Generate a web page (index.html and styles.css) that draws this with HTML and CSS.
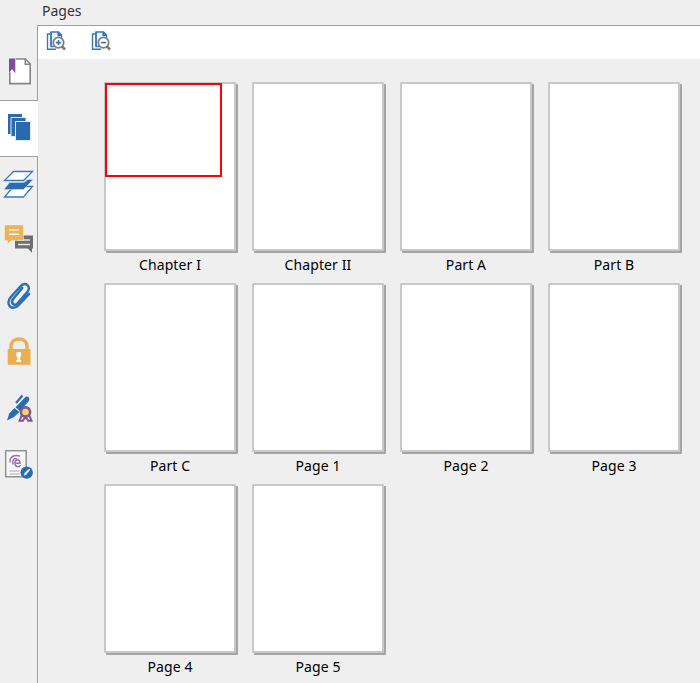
FILE: index.html
```html
<!DOCTYPE html>
<html lang="en">
<head>
<meta charset="utf-8">
<title>Pages</title>
<link rel="stylesheet" href="styles.css">
</head>
<body>
<div class="app">
  <header class="title">Pages</header>
  <nav class="sidebar">
    <div class="tab first"><svg width="38" height="44" viewBox="0 0 38 44"><path d="M9.8 28.500V39.600H30.200V20L25.500 15H16" fill="#fff" stroke="#858585" stroke-width="1.600"/><path d="M25.300 15v5.200h5.200" fill="none" stroke="#858585" stroke-width="1.600"/><path d="M9 14.500h6.300v14.700l-3.200-4.100L9 29.200z" fill="#7b4f93"/></svg></div>
    <div class="tab active"><svg width="38" height="44" viewBox="0 0 38 44"><path d="M8 7h14v20H8z" fill="#2a69ab"/><path d="M11 10.500h15v19H11z" fill="#2a69ab" stroke="#dcecf8"/><path d="M15.500 14.500h15v19h-15z" fill="#2a69ab" stroke="#dcecf8"/></svg></div>
    <div class="tab"><svg width="38" height="44" viewBox="0 0 38 44"><path d="M13.500 9.500H32.500L23.500 18.500H4.500z" fill="#fff" stroke="#397bb9" stroke-width="1.300"/><path d="M13.500 24.500H32.500L23.500 35H4.500z" fill="#fff" stroke="#397bb9" stroke-width="1.300"/><path d="M9.500 20.500h14.500l4-3h5L23.500 27.500H4z" fill="#2a6caf" stroke="#efefef" stroke-width=".4"/></svg></div>
    <div class="tab"><svg width="38" height="44" viewBox="0 0 38 44"><path d="M15 17.500h18v13h-1v4.200l-4.300-4.200H15z" fill="#6e6e6e"/><path d="M18 22h12M18 26.500h12" stroke="#e4e4e4" stroke-width="1.600"/><path d="M4.500 7H23.500v15.500H11.500L7.500 26v-3.500h-3z" fill="#eeb256" stroke="#efefef" stroke-width=".5"/><path d="M9 12h10M9 16.200h10" stroke="#fff6e5" stroke-width="1.600"/></svg></div>
    <div class="tab"><svg width="38" height="44" viewBox="0 0 38 44"><path d="M22 13.500L12.800 24.500C9.800 28.500 14.200 32.300 17.300 28.800L27 17.600C31.500 12 25 6.500 20.500 11.500L10.500 22.500C4 30.500 12.500 37 18.500 30.500L28.800 19.500" transform="translate(.3 .5)" fill="none" stroke="#2c6fb2" stroke-width="2.500" stroke-linejoin="round" stroke-linecap="round"/></svg></div>
    <div class="tab"><svg width="38" height="44" viewBox="0 0 38 44"><path d="M11 21V16.500c0-10 16-10 16 0V21" fill="none" stroke="#eaae54" stroke-width="3.400"/><rect x="7.700" y="19" width="22.800" height="15.700" rx=".8" fill="#eaae54"/><path d="M16.500 22h4.500v4l-.8 1v3h1v2h-4.800v-2h1v-3h-1z" fill="#fffdf6"/></svg></div>
    <div class="tab"><svg width="38" height="44" viewBox="0 0 38 44"><path d="M7 34.500L9.200 27.500 14.500 22 19.300 26 14 31z" fill="#2a6cae"/><path d="M15.500 21.300L24.500 12Q26.500 9.500 28.800 11.300Q30.200 13 28.500 15.500L20 25z" fill="#2a6cae"/><path d="M16 17L22.500 9.500" stroke="#2a6cae" stroke-width="2.200"/><path d="M22 28.500l-2.500 6.200h3.300l2.700-4 2.700 4h3.300L29 28.500" fill="#efefef" stroke="#80569b" stroke-width="2"/><circle cx="25.500" cy="26" r="4.600" fill="#ffd662" stroke="#80569b" stroke-width="2.600"/></svg></div>
    <div class="tab"><svg width="38" height="44" viewBox="0 0 38 44"><path d="M5.700 8.700h20.500v26H5.700z" fill="#f8f8f8" stroke="#929292" stroke-width="1.500"/><path d="M9.500 29h10M9.500 32h10" stroke="#aaa" stroke-width="1.200"/><path d="M10 20.500C10 13 15.500 13 20 14M13 22.500C12 17 15 15.500 17 17.500M15 21.200h5c0-5-5-4-5 0s4 4.500 5.500 2" fill="none" stroke="#9b75ac" stroke-width="1.500"/><circle cx="26.700" cy="30.600" r="6.200" fill="#286caf"/><path d="M23.700 33.700l1-3 4.500-4 1 1-4 5z" fill="#eaf5ff"/></svg></div>
    <div class="filler"></div>
  </nav>
  <main class="panel">
    <div class="toolbar">
      <svg width="22" height="22" viewBox="0 0 22 22"><path d="M5.500 4H2.500V19.300H11" fill="none" stroke="#3977b6" stroke-width="1.400"/><path d="M6 16.500V2h7.500l3 3V9" fill="#eaf4fd" stroke="#3977b6" stroke-width="1.400"/><path d="M6 2v14.500h3" fill="none" stroke="#3977b6" stroke-width="1.400"/><path d="M12.500 1.500V6h4.500z" fill="#2870b8"/><circle cx="13.500" cy="12.600" r="5.200" fill="#fff" stroke="#808080" stroke-width="1.800"/><path d="M17 16.500l3 3" stroke="#777" stroke-width="2.500"/><path d="M10.800 12.600h5.400M13.500 9.900v5.400" stroke="#3475b4" stroke-width="1.600"/></svg>
      <svg width="22" height="22" viewBox="0 0 22 22"><path d="M5.500 4H2.500V19.300H11" fill="none" stroke="#3977b6" stroke-width="1.400"/><path d="M6 16.500V2h7.500l3 3V9" fill="#eaf4fd" stroke="#3977b6" stroke-width="1.400"/><path d="M6 2v14.500h3" fill="none" stroke="#3977b6" stroke-width="1.400"/><path d="M12.500 1.500V6h4.500z" fill="#2870b8"/><circle cx="13.500" cy="12.600" r="5.200" fill="#fff" stroke="#808080" stroke-width="1.800"/><path d="M17 16.500l3 3" stroke="#777" stroke-width="2.500"/><path d="M10.800 12.600h5.400" stroke="#3475b4" stroke-width="1.600"/></svg>
    </div>
    <div class="grid">
      <figure><div class="page"><div class="viewport"></div></div><figcaption>Chapter I</figcaption></figure>
      <figure><div class="page"></div><figcaption>Chapter II</figcaption></figure>
      <figure><div class="page"></div><figcaption>Part A</figcaption></figure>
      <figure><div class="page"></div><figcaption>Part B</figcaption></figure>
      <figure><div class="page"></div><figcaption>Part C</figcaption></figure>
      <figure><div class="page"></div><figcaption>Page 1</figcaption></figure>
      <figure><div class="page"></div><figcaption>Page 2</figcaption></figure>
      <figure><div class="page"></div><figcaption>Page 3</figcaption></figure>
      <figure><div class="page"></div><figcaption>Page 4</figcaption></figure>
      <figure><div class="page"></div><figcaption>Page 5</figcaption></figure>
    </div>
  </main>
</div>
</body>
</html>
```
FILE: styles.css
```css
* { box-sizing: border-box; }
body {
  margin: 0;
  background: #efefef;
  color: #000;
  font: 14px/20px "Noto Sans", sans-serif;
}
.app {
  display: grid;
  grid-template: 25px 658px / 38px 662px;
  height: 683px;
  overflow: hidden;
}
.title {
  grid-column: 1 / 3;
  padding: 1px 0 0 42px;
  color: #333;
}
.sidebar { display: flex; flex-direction: column; }
.tab {
  height: 56px;
  flex: none;
  padding-top: 5px;
  border-right: 1px solid #a0a0a0;
}
.tab svg { display: block; overflow: visible; }
.tab.first { height: 75px; padding-top: 19px; }
.tab.active {
  height: 57px;
  padding-top: 6px;
  background: #fff;
  border: solid #a0a0a0;
  border-width: 1px 0;
}
.filler { flex: 1; border-right: 1px solid #a0a0a0; }
.panel { border-top: 1px solid #a0a0a0; }
.toolbar {
  display: flex;
  gap: 23px;
  height: 33px;
  padding: 4px 0 0 7px;
  background: #fff;
}
.grid {
  display: grid;
  grid-template-columns: repeat(4, 132px);
  grid-auto-rows: 201px;
  column-gap: 16px;
  padding: 23px 0 0 66px;
}
figure { margin: 0; }
.page {
  position: relative;
  width: 132px;
  height: 169px;
  background: #fff;
  border: 2px solid #c8c8c8;
  border-radius: 1px;
  box-shadow: 2px 2px 0 #a4a4a4;
}
.viewport {
  position: absolute;
  left: -1px;
  top: -1px;
  width: 117px;
  height: 94px;
  border: 2px solid #f00;
}
figcaption {
  margin-top: 4px;
  text-align: center;
  letter-spacing: .1px;
}
```
